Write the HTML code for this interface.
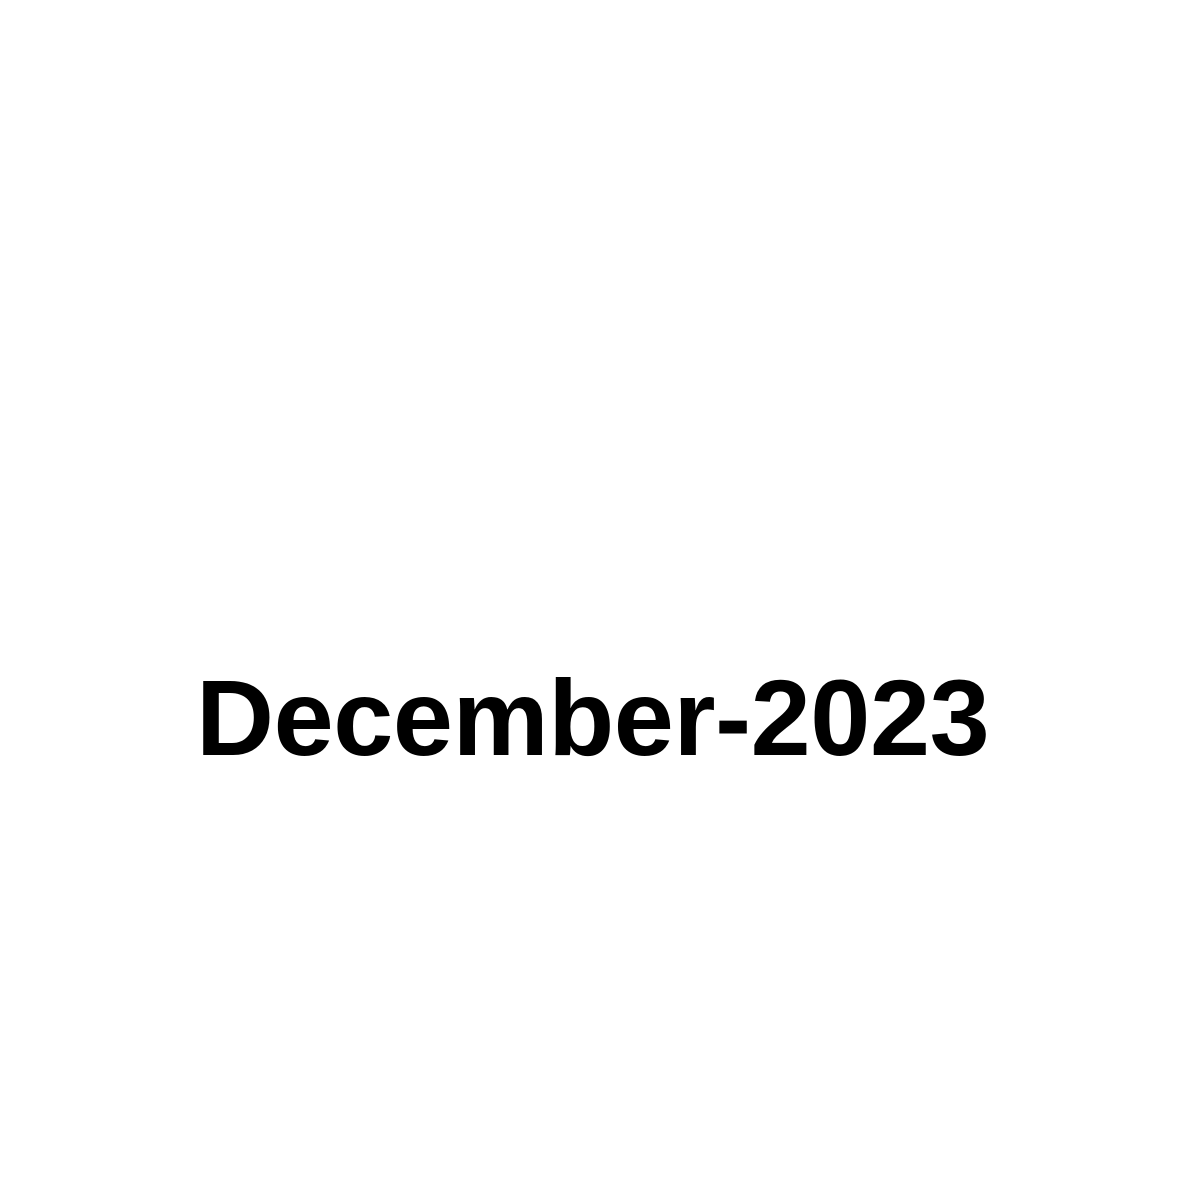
<!DOCTYPE html>
<html><head><style>
html,body{margin:0;padding:0;background:#fff;width:1200px;height:1200px;overflow:hidden;position:relative}
.t{position:absolute;left:196px;top:664px;font-family:"Liberation Sans",sans-serif;font-weight:bold;font-size:108px;line-height:108px;color:#000;white-space:nowrap;letter-spacing:-0.4px}
</style></head><body>
<div class="t">December-2023</div>
</body></html>
